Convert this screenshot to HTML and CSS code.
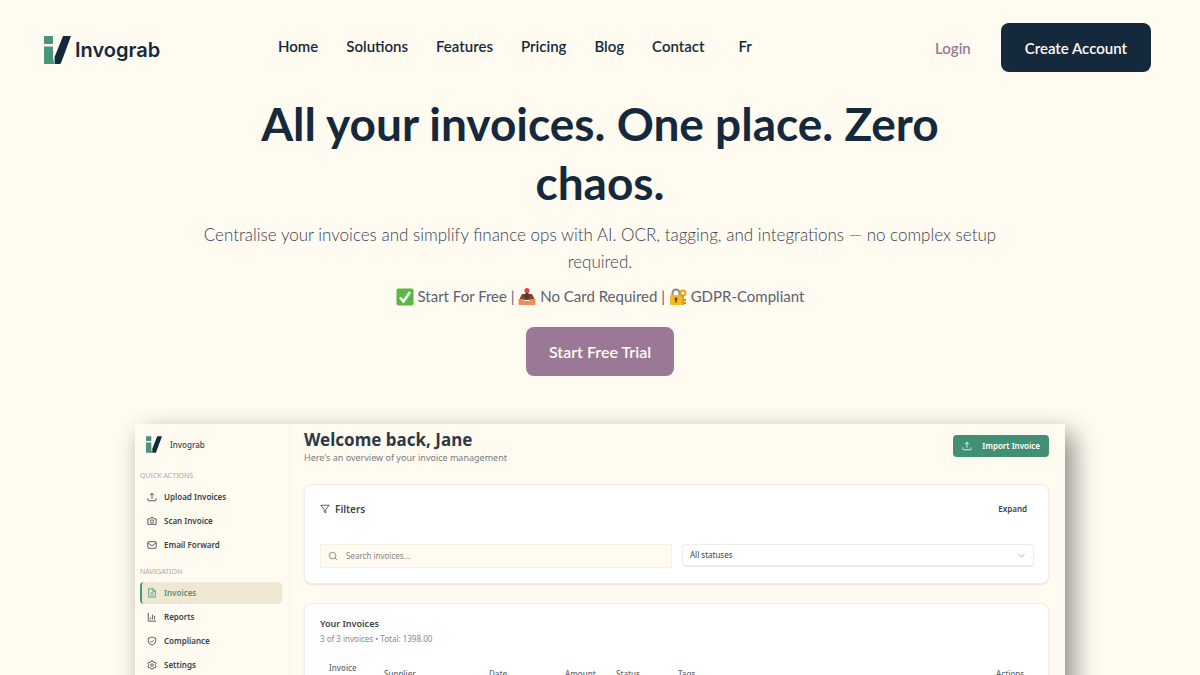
FILE: index.html
```html
<!DOCTYPE html>
<html lang="en">
<head>
<meta charset="utf-8">
<meta name="viewport" content="width=device-width, initial-scale=1">
<title>Invograb</title>
<link rel="stylesheet" href="styles.css">
</head>
<body>
<svg class="defs" aria-hidden="true">
  <symbol id="mark" viewBox="0 0 27 28">
    <rect x="0" y="0" width="9" height="8" rx="1" fill="#48957b"/>
    <path d="M0 10.500h9v12L10.500 28H1a1 1 0 0 1-1-1z" fill="#48957b"/>
    <path d="M19 0h7q1 0 .7 1L17 27q-.4 1-1.400 1h-4q-1 0-1-1v-6z" fill="#14283b"/>
  </symbol>
  <symbol id="upload" viewBox="0 0 24 24"><path d="M12 16V3M7 8l5-5 5 5M2 15v4q0 2 2 2h16q2 0 2-2v-4"/></symbol>
</svg>
<header class="site-header">
  <a class="brand" href="#"><svg class="brand-mark"><use href="#mark"/></svg><span>Invograb</span></a>
  <nav class="site-nav">
    <a href="#">Home</a><a href="#">Solutions</a><a href="#">Features</a><a href="#">Pricing</a><a href="#">Blog</a><a href="#">Contact</a><a class="lang" href="#">Fr</a>
  </nav>
  <div class="account">
    <a class="login" href="#">Login</a>
    <button class="button button-dark" type="button">Create Account</button>
  </div>
</header>
<main class="hero">
  <h1>All your invoices. One place. Zero chaos.</h1>
  <p class="lead">Centralise your invoices and simplify finance ops with AI. OCR, tagging, and integrations — no complex setup required.</p>
  <p class="perks">
    <svg class="emoji" viewBox="0 0 18 18"><rect x=".5" y=".5" width="17" height="17" rx="2" fill="#59b947"/><path d="M4 9.500l3.500 4L14 4" fill="none" stroke="#fff" stroke-width="2.600"/></svg>
    Start For Free |
    <svg class="emoji" viewBox="0 0 18 18"><path d="M4 6h10l3 6H1z" fill="#7c4a32"/><path d="M.5 11h5l1 2h5l1-2h5v5q0 1-1 1h-15q-1 0-1-1z" fill="#ee8c5c"/><path d="M9 11l-4-4h2.500V4h3v3H13z" fill="#5c3327"/><circle cx="9" cy="2.500" r="2.500" fill="#e0454a"/></svg>
    No Card Required |
    <svg class="emoji" viewBox="0 0 18 18"><path d="M3.500 8V5a3.500 3.500 0 0 1 7 0v3" fill="none" stroke="#8b8c86" stroke-width="2"/><rect x="1" y="7" width="12" height="10" rx="1.500" fill="#f9b91c"/><circle cx="7" cy="11" r="1.400" fill="#49413a"/><path d="M6.300 11h1.400v3.500H6.300z" fill="#49413a"/><circle cx="14" cy="5" r="2.500" fill="none" stroke="#e8a51c" stroke-width="2"/><path d="M14 7v10M14 12h3M14 15h3" stroke="#d9961a" stroke-width="1.800"/></svg>
    GDPR-Compliant
  </p>
  <button class="button button-plum" type="button">Start Free Trial</button>

  <section class="dashboard">
    <aside class="sidebar">
      <div class="side-brand"><svg class="side-mark"><use href="#mark"/></svg><span>Invograb</span></div>
      <h2 class="side-title">QUICK ACTIONS</h2>
      <nav class="side-list">
        <a href="#"><svg class="icon"><use href="#upload"/></svg>Upload Invoices</a>
        <a href="#"><svg class="icon" viewBox="0 0 24 24"><path d="M2 7h5l2-3h6l2 3h5v13H2z"/><circle cx="12" cy="13" r="4"/></svg>Scan Invoice</a>
        <a href="#"><svg class="icon" viewBox="0 0 24 24"><rect x="2" y="4" width="20" height="16" rx="2"/><path d="M2 7l10 7 10-7"/></svg>Email Forward</a>
      </nav>
      <h2 class="side-title">NAVIGATION</h2>
      <nav class="side-list">
        <a class="active" href="#"><svg class="icon" viewBox="0 0 24 24"><path d="M4 2h11l5 5v15H4zM14 2v6h6M8 12h8M8 17h8"/></svg>Invoices</a>
        <a href="#"><svg class="icon" viewBox="0 0 24 24"><path d="M3 2v20h19M8 18v-5M13 18V6M18 18v-9"/></svg>Reports</a>
        <a href="#"><svg class="icon" viewBox="0 0 24 24"><path d="M12 2q4 3 9 3v7q0 7-9 10-9-3-9-10V5q5 0 9-3zM8 12l3 3 5-5"/></svg>Compliance</a>
        <a href="#"><svg class="icon" viewBox="0 0 24 24"><path d="M10 2h4l1 3 2 1 3-1 2 4-2 2v2l2 2-2 4-3-1-2 1-1 3h-4l-1-3-2-1-3 1-2-4 2-2v-2L2 9l2-4 3 1 2-1z"/><circle cx="12" cy="12" r="3"/></svg>Settings</a>
      </nav>
    </aside>
    <div class="content">
      <div class="welcome">
        <div>
          <h2>Welcome back, Jane</h2>
          <p>Here's an overview of your invoice management</p>
        </div>
        <button class="import" type="button"><svg class="icon"><use href="#upload"/></svg>Import Invoice</button>
      </div>
      <section class="card">
        <div class="card-head">
          <h3><svg class="icon" viewBox="0 0 24 24"><path d="M2 3h20l-8 10v8l-4-2v-6z"/></svg>Filters</h3>
          <button class="expand" type="button">Expand</button>
        </div>
        <div class="fields">
          <label class="search"><svg class="icon" viewBox="0 0 24 24"><circle cx="11" cy="11" r="8"/><path d="M17 17l5 5"/></svg><input type="text" placeholder="Search invoices..." aria-label="Search invoices"></label>
          <div class="status"><select aria-label="Status"><option>All statuses</option></select><svg class="chevron" viewBox="0 0 24 24"><path d="M4 8l8 8 8-8"/></svg></div>
        </div>
      </section>
      <section class="card">
        <h3 class="list-title">Your Invoices</h3>
        <p class="summary">3 of 3 invoices • Total: 1398.00</p>
        <table>
          <thead><tr><th class="c-invoice">Invoice</th><th class="c-supplier">Supplier</th><th class="c-date">Date</th><th class="c-amount">Amount</th><th class="c-status">Status</th><th>Tags</th><th class="c-actions">Actions</th></tr></thead>
        </table>
      </section>
    </div>
  </section>
</main>
</body>
</html>
```
FILE: styles.css
```css
* { box-sizing: border-box; }
body {
  margin: 0;
  height: 100vh;
  overflow: hidden;
  background: #fffbf0;
  color: #15293c;
  font-family: Lato, "Noto Sans", sans-serif;
}
h1, h2, h3, p { margin: 0; }
a { color: inherit; text-decoration: none; }
button, input, select { font: inherit; color: inherit; }
button { border: 0; cursor: pointer; }
.defs { position: absolute; width: 0; height: 0; }

.site-header {
  display: flex;
  align-items: center;
  padding: 23px 49px 0 44px;
}
.brand {
  display: flex;
  align-items: center;
  gap: 4px;
  width: 234px;
  padding-top: 4px;
  font: 600 20px/28px Inter, sans-serif;
}
.brand-mark { width: 27px; height: 28px; }
.site-nav {
  display: flex;
  gap: 28px;
  padding-bottom: 3px;
  font-size: 15px;
  font-weight: 600;
}
.lang { margin-left: 6px; }
.account {
  display: flex;
  align-items: center;
  gap: 30px;
  margin-left: auto;
  font-size: 15px;
  font-weight: 600;
}
.login { color: #9b7896; }
.button {
  height: 49px;
  padding: 0 24px;
  border-radius: 8px;
  color: #fffbf0;
  font-size: 15px;
  font-weight: 600;
}
.button-dark { background: #15293c; }
.button-plum { padding: 0 23px; background: #9b7896; font-size: 16px; }

.hero {
  display: flex;
  flex-direction: column;
  align-items: center;
  padding: 22px 135px 0;
  text-align: center;
}
h1 {
  max-width: 800px;
  font-size: 46px;
  line-height: 59px;
  font-weight: 700;
}
.lead {
  max-width: 820px;
  margin-top: 9px;
  color: #384256;
  font-size: 17px;
  line-height: 27px;
  font-weight: 300;
}
.perks {
  margin: 8px 0 17px;
  color: #5a6270;
  font-size: 15px;
  line-height: 27px;
}
.emoji { width: 18px; height: 18px; vertical-align: -4px; }

.dashboard {
  display: flex;
  width: 100%;
  margin-top: 48px;
  background: #fffbf0;
  box-shadow: 8px 10px 24px rgba(0, 0, 0, .45);
  color: #39424f;
  font: 600 8px/12px "Noto Sans", sans-serif;
  text-align: left;
}
.icon, .chevron {
  width: 10px;
  height: 10px;
  flex: none;
  fill: none;
  stroke: currentColor;
  stroke-width: 2;
}
.sidebar {
  width: 155px;
  flex: none;
  padding: 12px 7px 0 5px;
  border-right: 1px solid #f7f2e8;
}
.side-brand {
  display: flex;
  align-items: center;
  gap: 8px;
  padding-left: 6px;
  font-weight: 500;
}
.side-mark { width: 16px; height: 17px; }
.side-title {
  margin-top: 17px;
  color: #a9a8a5;
  font-size: 7px;
  line-height: 12px;
  font-weight: 400;
}
.side-list {
  display: flex;
  flex-direction: column;
  gap: 2px;
  margin-top: 4px;
}
.side-list + .side-title { margin-top: 10px; }
.side-list a {
  display: flex;
  align-items: center;
  gap: 7px;
  height: 22px;
  padding-left: 7px;
  border-radius: 4px;
}
.side-list .active {
  padding-left: 5px;
  border-left: 2px solid #48957b;
  background: #eee8d3;
  color: #48957b;
}
.content {
  flex: 1;
  padding: 5px 16px 0 14px;
}
.welcome {
  display: flex;
  justify-content: space-between;
  height: 55px;
}
.welcome h2 {
  color: #2c3a48;
  font-size: 17px;
  line-height: 22px;
  font-weight: 700;
}
.welcome p { margin-top: 1px; color: #777b82; font-size: 9px; font-weight: 400; }
.import {
  display: flex;
  align-items: center;
  gap: 10px;
  height: 22px;
  margin-top: 6px;
  padding: 0 9px;
  border-radius: 4px;
  background: #429074;
  color: #fff;
}
.card {
  padding: 15px 14px 15px 15px;
  border: 1px solid #f3eee3;
  border-radius: 8px;
  background: #fff;
  box-shadow: 0 1px 2px rgba(0, 0, 0, .1);
}
.card + .card { margin-top: 19px; }
.card-head {
  display: flex;
  align-items: center;
  justify-content: space-between;
  height: 18px;
}
.card h3 {
  display: flex;
  align-items: center;
  gap: 5px;
  font-size: 10px;
  font-weight: 600;
}
.expand { padding: 0 7px; background: none; }
.fields {
  display: grid;
  grid-template-columns: 1fr 1fr;
  gap: 10px;
  margin-top: 26px;
}
.search {
  display: flex;
  align-items: center;
  gap: 8px;
  height: 24px;
  padding: 0 7px;
  border: 1px solid #f7f2e3;
  background: #fffbf0;
  color: #777b82;
}
.search input {
  width: 100%;
  padding: 0;
  border: 0;
  background: none;
}
.search input::placeholder { color: #858586; font-weight: 400; opacity: 1; }
.status {
  display: flex;
  align-items: center;
  height: 22px;
  padding-right: 7px;
  border: 1px solid #ededeb;
  border-radius: 4px;
  box-shadow: 0 1px 1px rgba(0, 0, 0, .1);
}
.status select {
  flex: 1;
  padding: 0 7px;
  border: 0;
  appearance: none;
  background: none;
  font-weight: 400;
}
.chevron { width: 9px; height: 9px; color: #999; }
.card .list-title { margin-top: -1px; font-size: 9px; line-height: 12px; }
.summary { margin-top: 3px; color: #858891; font-size: 8px; font-weight: 400; }
table {
  width: 100%;
  margin-top: 17px;
  border-collapse: collapse;
  table-layout: fixed;
}
th {
  height: 23px;
  padding: 0;
  color: #606773;
  font-size: 8px;
  font-weight: 500;
  text-align: left;
}
.c-invoice { width: 64px; padding-left: 9px; vertical-align: top; }
.c-supplier { width: 105px; }
.c-date { width: 76px; }
.c-amount { width: 51px; }
.c-status { width: 62px; }
.c-actions { width: 38px; }
```
